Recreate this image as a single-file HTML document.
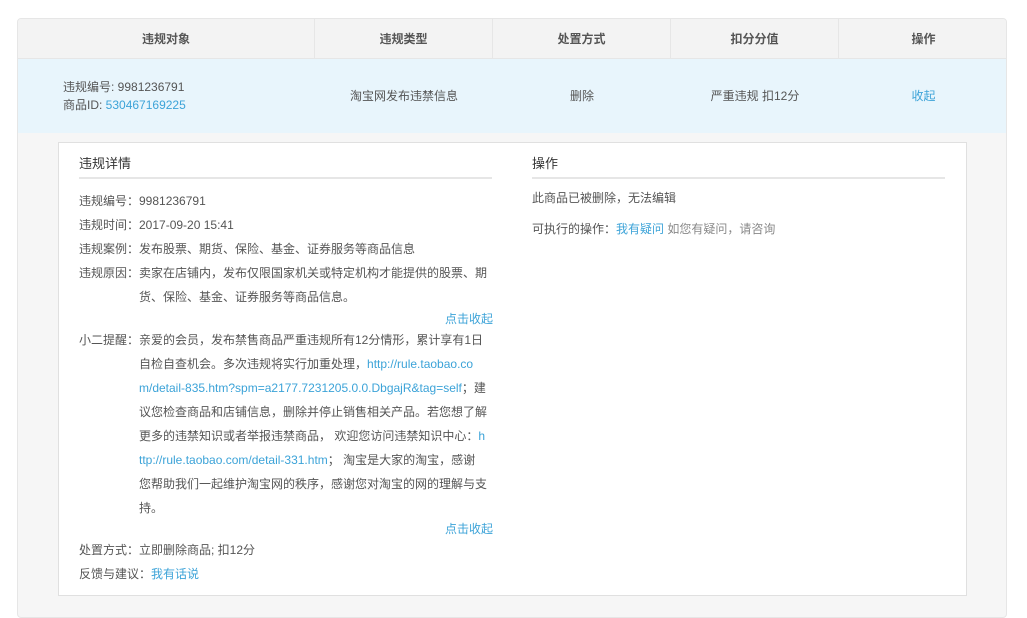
<!DOCTYPE html>
<html><head><meta charset="utf-8"><style>
*{margin:0;padding:0;box-sizing:border-box}
body{width:1027px;height:607px;background:#fff;font-family:"Liberation Sans","Noto Sans CJK SC",sans-serif;font-size:12px;color:#555;position:relative;overflow:hidden}
.wrap{position:absolute;left:17px;top:18px;width:990px;height:600px;border:1px solid #e6e6e6;border-radius:4px;background:#f6f6f6;overflow:hidden}
.hd{position:absolute;left:0;top:0;width:100%;height:40px;background:#f3f3f3;border-bottom:1px solid #e6e6e6}
.hd div{position:absolute;top:0;height:40px;line-height:40px;text-align:center;font-weight:bold;color:#555;border-right:1px solid #e6e6e6}
.row{position:absolute;left:0;top:40px;width:100%;height:74px;background:#e8f5fc}
.row div{position:absolute;top:0;height:74px;line-height:74px;text-align:center;color:#555}
a{color:#3ca3d8;text-decoration:none}
.box{position:absolute;left:40px;top:123px;width:909px;height:454px;background:#fff;border:1px solid #e0e0e0}
.t{position:absolute;font-size:13px;color:#333;border-bottom:2px solid #e6e6e6;height:22px;line-height:14px}
.l{position:absolute;line-height:24px;white-space:nowrap}
.lab{position:absolute;left:0;width:60px}
.txt{position:absolute;left:60px;width:360px;white-space:nowrap}
</style></head><body>
<div class="wrap">
<div class="hd">
<div style="left:0;width:297px">违规对象</div>
<div style="left:297px;width:178px">违规类型</div>
<div style="left:475px;width:178px">处置方式</div>
<div style="left:653px;width:168px">扣分分值</div>
<div style="left:821px;width:169px;border:none">操作</div>
</div>
<div class="row">
<div style="left:45px;line-height:18px;top:19px;height:40px;text-align:left">违规编号: 9981236791<br>商品ID: <a>530467169225</a></div>
<div style="left:297px;width:178px">淘宝网发布违禁信息</div>
<div style="left:475px;width:178px">删除</div>
<div style="left:653px;width:168px">严重违规 扣12分</div>
<div style="left:821px;width:169px"><a>收起</a></div>
</div>
<div class="box">
<div class="t" style="left:20px;top:14px;width:413px">违规详情</div>
<div class="t" style="left:473px;top:14px;width:413px">操作</div>
<div style="position:absolute;left:20px;top:46px;width:414px">
<div class="l" style="top:0">违规编号：9981236791</div>
<div class="l" style="top:24px">违规时间：2017-09-20 15:41</div>
<div class="l" style="top:48px">违规案例：发布股票、期货、保险、基金、证券服务等商品信息</div>
<div class="l" style="top:72px;width:414px;height:48px"><span class="lab">违规原因：</span><span class="txt">卖家在店铺内，发布仅限国家机关或特定机构才能提供的股票、期<br>货、保险、基金、证券服务等商品信息。</span></div>
<div class="l" style="top:118px;right:0"><a>点击收起</a></div>
<div class="l" style="top:139px;width:414px;height:192px"><span class="lab">小二提醒：</span><span class="txt">亲爱的会员，发布禁售商品严重违规所有12分情形，累计享有1日<br>自检自查机会。多次违规将实行加重处理，<a>http://rule.taobao.co</a><br><a>m/detail-835.htm?spm=a2177.7231205.0.0.DbgajR&amp;tag=self</a>；建<br>议您检查商品和店铺信息，删除并停止销售相关产品。若您想了解<br>更多的违禁知识或者举报违禁商品， 欢迎您访问违禁知识中心：<a>h</a><br><a>ttp://rule.taobao.com/detail-331.htm</a>； 淘宝是大家的淘宝，感谢<br>您帮助我们一起维护淘宝网的秩序，感谢您对淘宝的网的理解与支<br>持。</span></div>
<div class="l" style="top:328px;right:0"><a>点击收起</a></div>
<div class="l" style="top:349px">处置方式：立即删除商品; 扣12分</div>
<div class="l" style="top:373px">反馈与建议：<a>我有话说</a></div>
</div>
<div class="l" style="left:473px;top:43px">此商品已被删除，无法编辑</div>
<div class="l" style="left:473px;top:74px">可执行的操作：<a>我有疑问</a> <span style="color:#888">如您有疑问，请咨询</span></div>
</div>
</div>
</body></html>
